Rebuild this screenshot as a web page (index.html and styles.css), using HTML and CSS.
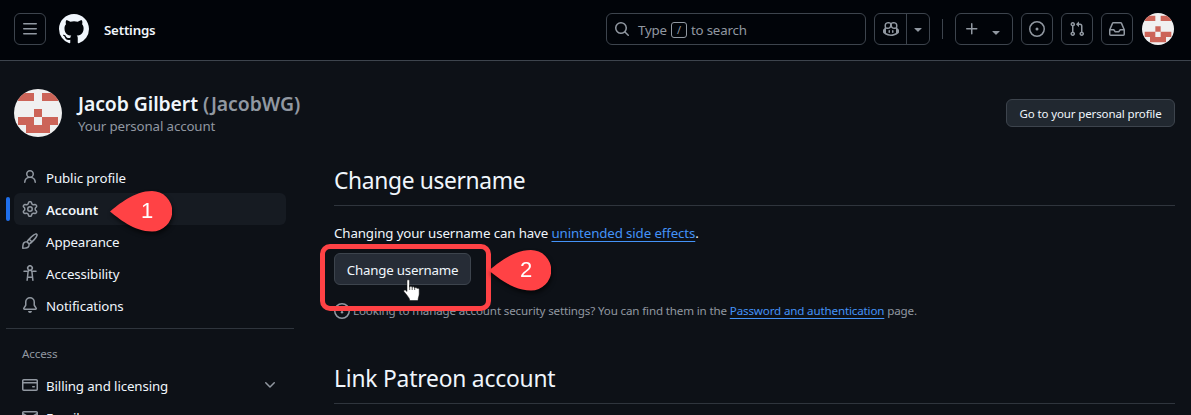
FILE: index.html
```html
<!DOCTYPE html>
<html lang="en">
<head>
<meta charset="utf-8">
<title>Account settings</title>
<link rel="stylesheet" href="styles.css">
</head>
<body>
<svg class="defs" width="0" height="0" aria-hidden="true">
  <symbol id="identicon" viewBox="0 0 48 48">
    <circle cx="24" cy="24" r="24" fill="#f0f0f0"/>
    <g clip-path="url(#round)" fill="#cc6458">
      <path d="M4 4h16v8H4zM28 4h16v8H28zM20 20h8v8h-8zM4 28h16v8H4zM28 28h16v8H28zM12 36h24v8H12z"/>
    </g>
  </symbol>
  <clipPath id="round"><circle cx="24" cy="24" r="24"/></clipPath>
  <symbol id="callout" viewBox="0 0 62 41">
    <path fill="#ff4245" d="M0 20.500C8 14 24 0 42 0a20 20 0 0 1 0 40.500C24 40.500 8 27 0 20.500Z"/>
  </symbol>
</svg>

<header class="topbar">
  <button class="icon-btn"><svg class="icon" viewBox="0 0 16 16"><path d="M1 2.750A.75.75 0 0 1 1.750 2h12.500a.75.75 0 0 1 0 1.500H1.750A.75.75 0 0 1 1 2.750Zm0 5A.75.75 0 0 1 1.750 7h12.500a.75.75 0 0 1 0 1.500H1.750A.75.75 0 0 1 1 7.750ZM1.750 12h12.500a.75.75 0 0 1 0 1.500H1.750a.75.75 0 0 1 0-1.500Z"/></svg></button>
  <svg class="logo" viewBox="0 0 16 16"><path d="M8 0c4.420 0 8 3.580 8 8a8.013 8.013 0 0 1-5.450 7.590c-.4.08-.55-.17-.55-.38 0-.27.01-1.130.01-2.200 0-.75-.25-1.230-.54-1.480 1.780-.2 3.650-.88 3.650-3.950 0-.88-.31-1.590-.82-2.150.08-.2.36-1.020-.08-2.120 0 0-.67-.22-2.200.82-.64-.18-1.320-.27-2-.27-.68 0-1.360.09-2 .27-1.530-1.030-2.200-.82-2.200-.82-.44 1.100-.16 1.920-.08 2.120-.51.56-.82 1.280-.82 2.150 0 3.060 1.860 3.750 3.640 3.950-.23.2-.44.55-.51 1.070-.46.21-1.610.55-2.330-.66-.15-.24-.6-.83-1.230-.82-.67.01-.27.38.01.53.34.19.73.9.82 1.130.16.45.68 1.310 2.690.94 0 .67.01 1.300.01 1.490 0 .21-.15.45-.55.38A7.995 7.995 0 0 1 0 8c0-4.420 3.580-8 8-8Z"/></svg>
  <span class="crumb">Settings</span>
  <div class="search">
    <svg class="icon" viewBox="0 0 16 16"><path d="M10.680 11.740a6 6 0 0 1-7.922-8.982 6 6 0 0 1 8.982 7.922l3.040 3.040a.749.749 0 0 1-.326 1.275.749.749 0 0 1-.734-.215ZM11.500 7a4.499 4.499 0 1 0-8.997 0A4.499 4.499 0 0 0 11.500 7Z"/></svg>
    <span class="type">Type</span><kbd>/</kbd><span>to search</span>
  </div>
  <div class="split">
    <button><svg class="icon" viewBox="0 0 16 16"><path d="M7.998 15.035c-4.562 0-7.873-2.914-7.998-3.749V9.338c.085-.628.677-1.686 1.588-2.065.013-.07.024-.143.036-.218.029-.183.06-.384.126-.612-.201-.508-.254-1.084-.254-1.656 0-.87.128-1.769.693-2.484.579-.733 1.494-1.124 2.724-1.261 1.206-.134 2.262.034 2.944.765.05.053.096.108.139.165.044-.057.094-.112.143-.165.682-.731 1.738-.899 2.944-.765 1.230.137 2.145.528 2.724 1.261.566.715.693 1.614.693 2.484 0 .572-.053 1.148-.254 1.656.066.228.098.429.126.612.012.076.024.148.037.218.924.385 1.522 1.471 1.591 2.095v1.872c0 .766-3.351 3.795-8.002 3.795Zm0-1.485c2.280 0 4.584-1.110 5.002-1.433V7.862l-.023-.116c-.49.21-1.075.291-1.727.291-1.146 0-2.059-.327-2.710-.991A3.222 3.222 0 0 1 8 6.303a3.240 3.240 0 0 1-.544.743c-.65.664-1.563.991-2.710.991-.652 0-1.236-.081-1.727-.291l-.023.116v4.255c.419.323 2.722 1.433 5.002 1.433ZM6.762 2.830c-.193-.206-.637-.413-1.682-.297-1.019.113-1.479.404-1.713.7-.247.312-.369.789-.369 1.554 0 .793.129 1.171.308 1.371.162.181.519.379 1.442.379.853 0 1.339-.235 1.638-.54.315-.322.527-.827.617-1.553.117-.935-.037-1.395-.241-1.614Zm4.155-.297c-1.044-.116-1.488.091-1.681.297-.204.219-.359.679-.242 1.614.091.726.303 1.231.618 1.553.299.305.784.54 1.638.54.922 0 1.280-.198 1.442-.379.179-.2.308-.578.308-1.371 0-.765-.123-1.242-.37-1.554-.233-.296-.693-.587-1.713-.7Z"/><path d="M6.250 9.037a.75.75 0 0 1 .75.75v1.501a.75.75 0 0 1-1.500 0V9.787a.75.75 0 0 1 .75-.75Zm4.250.75v1.501a.75.75 0 0 1-1.500 0V9.787a.75.75 0 0 1 1.500 0Z"/></svg></button>
    <button class="caret"><svg class="icon" viewBox="0 0 16 16"><path d="m4.427 7.427 3.396 3.396a.25.25 0 0 0 .354 0l3.396-3.396A.25.25 0 0 0 11.396 7H4.604a.25.25 0 0 0-.177.427Z"/></svg></button>
  </div>
  <span class="vrule"></span>
  <button class="icon-btn create">
    <svg class="icon" viewBox="0 0 16 16"><path d="M7.750 2a.75.75 0 0 1 .75.75V7h4.250a.75.75 0 0 1 0 1.500H8.500v4.250a.75.75 0 0 1-1.500 0V8.500H2.750a.75.75 0 0 1 0-1.500H7V2.750A.75.75 0 0 1 7.750 2Z"/></svg>
    <svg class="icon drop" viewBox="0 0 16 16"><path d="m4.427 7.427 3.396 3.396a.25.25 0 0 0 .354 0l3.396-3.396A.25.25 0 0 0 11.396 7H4.604a.25.25 0 0 0-.177.427Z"/></svg>
  </button>
  <button class="icon-btn"><svg class="icon" viewBox="0 0 16 16"><path d="M8 9.500a1.500 1.500 0 1 0 0-3 1.500 1.500 0 0 0 0 3Z"/><path d="M8 0a8 8 0 1 1 0 16A8 8 0 0 1 8 0ZM1.500 8a6.500 6.500 0 1 0 13 0 6.500 6.500 0 0 0-13 0Z"/></svg></button>
  <button class="icon-btn"><svg class="icon" viewBox="0 0 16 16"><path d="M1.500 3.250a2.250 2.250 0 1 1 3 2.122v5.256a2.251 2.251 0 1 1-1.500 0V5.372A2.250 2.250 0 0 1 1.500 3.250Zm5.677-.177L9.573.677A.25.25 0 0 1 10 .854V2.500h1A2.500 2.500 0 0 1 13.500 5v5.628a2.251 2.251 0 1 1-1.500 0V5a1 1 0 0 0-1-1h-1v1.646a.25.25 0 0 1-.427.177L7.177 3.427a.25.25 0 0 1 0-.354ZM3.750 2.500a.75.75 0 1 0 0 1.500.75.75 0 0 0 0-1.500Zm0 9.500a.75.75 0 1 0 0 1.500.75.75 0 0 0 0-1.500Zm8.250.75a.75.75 0 1 0 1.500 0 .75.75 0 0 0-1.500 0Z"/></svg></button>
  <button class="icon-btn"><svg class="icon" viewBox="0 0 16 16"><path d="M2.800 2.060A1.750 1.750 0 0 1 4.410 1h7.180c.7 0 1.333.417 1.610 1.060l2.740 6.395c.04.093.06.194.06.295v4.500A1.750 1.750 0 0 1 14.250 15H1.750A1.750 1.750 0 0 1 0 13.250v-4.500c0-.101.02-.202.06-.295Zm1.610.44a.25.25 0 0 0-.23.152L1.887 8H4.750a.75.75 0 0 1 .6.3L6.625 10h2.750l1.275-1.700a.75.75 0 0 1 .6-.3h2.863L11.820 2.652a.25.25 0 0 0-.23-.152Zm10.090 7h-2.875l-1.275 1.700a.75.75 0 0 1-.6.3h-3.500a.75.75 0 0 1-.6-.3L4.375 9.500H1.500v3.750c0 .138.112.25.25.25h12.500a.25.25 0 0 0 .25-.25Z"/></svg></button>
  <svg class="avatar-sm"><use href="#identicon"/></svg>
</header>

<section class="profile">
  <svg class="avatar-lg"><use href="#identicon"/></svg>
  <div class="who">
    <h1>Jacob Gilbert <span>(JacobWG)</span></h1>
    <p>Your personal account</p>
  </div>
  <button class="btn btn-sm"><span>Go to your personal profile</span></button>
</section>

<div class="layout">
  <nav class="side">
    <a class="item"><svg class="icon" viewBox="0 0 16 16"><path d="M10.561 8.073a6.005 6.005 0 0 1 3.432 5.142.75.75 0 1 1-1.498.07 4.500 4.500 0 0 0-8.990 0 .75.75 0 0 1-1.498-.07 6.004 6.004 0 0 1 3.431-5.142 3.999 3.999 0 1 1 5.123 0ZM10.500 5a2.500 2.500 0 1 0-5 0 2.500 2.500 0 0 0 5 0Z"/></svg><span>Public profile</span></a>
    <a class="item active"><svg class="icon" viewBox="0 0 16 16"><path d="M8 0a8.200 8.200 0 0 1 .701.031C9.444.095 9.990.645 10.160 1.290l.288 1.107c.018.066.079.158.212.224.231.114.454.243.668.386.123.082.233.09.299.071l1.103-.303c.644-.176 1.392.021 1.820.63.27.385.506.792.704 1.218.315.675.111 1.422-.364 1.891l-.814.806c-.049.048-.098.147-.088.294.016.257.016.515 0 .772-.01.147.038.246.088.294l.814.806c.475.469.679 1.216.364 1.891a7.977 7.977 0 0 1-.704 1.217c-.428.61-1.176.807-1.820.63l-1.102-.302c-.067-.019-.177-.011-.3.071a5.909 5.909 0 0 1-.668.386c-.133.066-.194.158-.211.224l-.29 1.106c-.168.646-.715 1.196-1.458 1.260a8.006 8.006 0 0 1-1.402 0c-.743-.064-1.289-.614-1.458-1.260l-.289-1.106c-.018-.066-.079-.158-.212-.224a5.738 5.738 0 0 1-.668-.386c-.123-.082-.233-.09-.299-.071l-1.103.303c-.644.176-1.392-.021-1.820-.63a8.120 8.120 0 0 1-.704-1.218c-.315-.675-.111-1.422.363-1.891l.815-.806c.05-.048.098-.147.088-.294a6.214 6.214 0 0 1 0-.772c.01-.147-.038-.246-.088-.294l-.815-.806C.635 6.045.431 5.298.746 4.623a7.920 7.920 0 0 1 .704-1.217c.428-.61 1.176-.807 1.820-.63l1.102.302c.067.019.177.011.3-.071.214-.143.437-.272.668-.386.133-.066.194-.158.211-.224l.29-1.106C6.009.645 6.556.095 7.299.03 7.530.010 7.764 0 8 0Zm-.571 1.525c-.036.003-.108.036-.137.146l-.289 1.105c-.147.561-.549.967-.998 1.189-.173.086-.34.183-.5.290-.417.278-.97.423-1.529.270l-1.103-.303c-.109-.030-.175.016-.195.045-.22.312-.412.644-.573.990-.014.031-.021.110.059.190l.815.806c.411.406.562.957.530 1.456a4.709 4.709 0 0 0 0 .582c.032.499-.119 1.050-.530 1.456l-.815.806c-.081.080-.073.159-.059.190.162.346.353.677.573.989.020.030.085.076.195.046l1.102-.303c.560-.153 1.113-.008 1.530.270.161.107.328.204.501.290.447.222.850.629.997 1.189l.289 1.105c.029.109.101.143.137.146a6.600 6.600 0 0 0 1.142 0c.036-.003.108-.036.137-.146l.289-1.105c.147-.561.549-.967.998-1.189.173-.086.340-.183.500-.290.417-.278.970-.423 1.529-.270l1.103.303c.109.029.175-.016.195-.045.220-.313.411-.644.573-.990.014-.031.021-.110-.059-.190l-.815-.806c-.411-.406-.562-.957-.530-1.456a4.709 4.709 0 0 0 0-.582c-.032-.499.119-1.050.530-1.456l.815-.806c.081-.080.073-.159.059-.190a6.464 6.464 0 0 0-.573-.989c-.020-.030-.085-.076-.195-.046l-1.102.303c-.560.153-1.113.008-1.530-.270a4.440 4.440 0 0 0-.501-.290c-.447-.222-.850-.629-.997-1.189l-.289-1.105c-.029-.110-.101-.143-.137-.146a6.600 6.600 0 0 0-1.142 0ZM11 8a3 3 0 1 1-6 0 3 3 0 0 1 6 0ZM9.500 8a1.500 1.500 0 1 0-3.001.001A1.500 1.500 0 0 0 9.500 8Z"/></svg><span>Account</span></a>
    <a class="item"><svg class="icon" viewBox="0 0 16 16"><path d="M11.134 1.535c.7-.509 1.416-.942 2.076-1.155.649-.21 1.463-.267 2.069.34.603.601.568 1.411.368 2.070-.202.668-.624 1.390-1.125 2.096-1.011 1.424-2.496 2.987-3.775 4.249-1.098 1.084-2.132 1.839-3.040 2.300a3.744 3.744 0 0 1-1.055 3.217c-.431.431-1.065.691-1.657.861-.614.177-1.294.287-1.914.357A21.151 21.151 0 0 1 .797 16H.743l.007-.750H.749L.742 16a.75.75 0 0 1-.743-.742l.743-.008-.742.007v-.054a21.250 21.250 0 0 1 .130-2.284c.067-.647.187-1.287.358-1.914.170-.591.430-1.226.860-1.657a3.746 3.746 0 0 1 3.227-1.054c.466-.893 1.225-1.907 2.314-2.982 1.271-1.255 2.833-2.750 4.245-3.777ZM1.620 13.089c-.051.464-.086.929-.104 1.395.466-.018.932-.053 1.396-.104a10.511 10.511 0 0 0 1.668-.309c.526-.151.856-.325 1.011-.480a2.250 2.250 0 1 0-3.182-3.182c-.155.155-.329.485-.480 1.011a10.515 10.515 0 0 0-.309 1.669Zm10.396-10.340c-1.224.89-2.605 2.189-3.822 3.384l1.718 1.718c1.210-1.205 2.510-2.597 3.387-3.833.470-.662.780-1.227.912-1.662.134-.444.032-.551.009-.575h-.001V1.780c-.014-.014-.113-.113-.548.027-.432.140-.995.462-1.655.942Zm-4.832 7.266-.001.001a9.859 9.859 0 0 0 1.630-1.142L7.155 7.216a9.700 9.700 0 0 0-1.161 1.607c.482.302.889.710 1.190 1.192Z"/></svg><span>Appearance</span></a>
    <a class="item"><svg class="icon" viewBox="0 0 16 16"><path d="M9.923 5.302c.063.063.122.129.178.198H14A.75.75 0 0 1 14 7h-3.300l.578 5.163.362 2.997a.75.75 0 0 1-1.490.18L9.868 13H6.132l-.282 2.340a.75.75 0 0 1-1.490-.18l.362-2.997L5.300 7H2a.75.75 0 0 1 0-1.500h3.900a2.540 2.540 0 0 1 .176-.198 3 3 0 1 1 3.847 0ZM9.200 7.073h-.001a1.206 1.206 0 0 0-2.398 0L6.305 11.500h3.390ZM9.500 3a1.500 1.500 0 1 0-3.001.001A1.500 1.500 0 0 0 9.500 3Z"/></svg><span>Accessibility</span></a>
    <a class="item"><svg class="icon" viewBox="0 0 16 16"><path d="M8 16a2 2 0 0 0 1.985-1.750c.017-.137-.097-.25-.235-.25h-3.500c-.138 0-.252.113-.235.25A2 2 0 0 0 8 16ZM3 5a5 5 0 0 1 10 0v2.947c0 .050.015.098.042.139l1.703 2.555A1.519 1.519 0 0 1 13.482 13H2.518a1.516 1.516 0 0 1-1.263-2.360l1.703-2.554A.255.255 0 0 0 3 7.947Zm5-3.500A3.500 3.500 0 0 0 4.500 5v2.947c0 .346-.102.683-.294.970l-1.703 2.556a.017.017 0 0 0-.003.010l.001.006c0 .002.002.004.004.006l.006.004.007.001h10.964l.007-.001.006-.004.004-.006.001-.007a.017.017 0 0 0-.003-.010l-1.703-2.554a1.745 1.745 0 0 1-.294-.970V5A3.500 3.500 0 0 0 8 1.500Z"/></svg><span>Notifications</span></a>
    <hr>
    <h3>Access</h3>
    <a class="item"><svg class="icon" viewBox="0 0 16 16"><path d="M10.750 9a.75.75 0 0 0 0 1.500h1.500a.75.75 0 0 0 0-1.500h-1.500Z"/><path d="M0 3.750C0 2.784.784 2 1.750 2h12.500c.966 0 1.750.784 1.750 1.750v8.500A1.750 1.750 0 0 1 14.250 14H1.750A1.750 1.750 0 0 1 0 12.250ZM14.500 6.500h-13v5.750c0 .138.112.25.25.25h12.500a.25.25 0 0 0 .25-.25Zm0-2.750a.25.25 0 0 0-.25-.25H1.750a.25.25 0 0 0-.25.25V5h13Z"/></svg><span>Billing and licensing</span><svg class="icon chev" viewBox="0 0 16 16"><path d="M12.780 5.220a.749.749 0 0 1 0 1.060l-4.250 4.250a.749.749 0 0 1-1.060 0L3.220 6.280a.749.749 0 1 1 1.060-1.060L8 8.939l3.720-3.719a.749.749 0 0 1 1.060 0Z"/></svg></a>
    <a class="item"><svg class="icon" viewBox="0 0 16 16"><path d="M1.750 2h12.500c.966 0 1.750.784 1.750 1.750v8.500A1.750 1.750 0 0 1 14.250 14H1.750A1.750 1.750 0 0 1 0 12.250v-8.500C0 2.784.784 2 1.750 2ZM1.500 12.251c0 .138.112.25.25.25h12.500a.25.25 0 0 0 .25-.25V5.809L8.380 9.397a.75.75 0 0 1-.760 0L1.500 5.809v6.442Zm13-8.181v-.320a.25.25 0 0 0-.25-.25H1.750a.25.25 0 0 0-.25.25v.320L8 7.880Z"/></svg><span>Emails</span></a>
  </nav>

  <main class="content">
    <h2>Change username</h2>
    <p class="lead">Changing your username can have <a>unintended side effects</a>.</p>
    <button class="btn btn-md"><span>Change username</span></button>
    <p class="note"><svg class="icon" viewBox="0 0 16 16"><path d="M8 10.500a1.200 1.200 0 1 0 0-2.400 1.200 1.200 0 0 0 0 2.400Z"/><path d="M8 0a8 8 0 1 1 0 16A8 8 0 0 1 8 0ZM1.500 8a6.500 6.500 0 1 0 13 0 6.500 6.500 0 0 0-13 0Z"/></svg><span>Looking to manage account security settings? You can find them in the <a>Password and authentication</a> page.</span></p>
    <h2 class="second">Link Patreon account</h2>
  </main>
</div>

<div class="marker"></div>
<div class="callout one"><svg><use href="#callout"/></svg><b>1</b></div>
<div class="callout two"><svg><use href="#callout"/></svg><b>2</b></div>
<svg class="pointer" viewBox="0 0 18 24"><path d="M4 1.500C4 .6 6.500.6 6.500 1.500V8c.4-1 2.400-.8 2.600.3.500-.8 2.300-.6 2.500.5.600-.7 2.200-.3 2.400.7.700-.5 2.200-.2 2.200 1V15c0 2-1 3-1.200 6.500H6.800C6.500 19 4.800 17.500 3.800 16L.9 12.500c-.6-1 .7-2 1.700-1.300L4 12.500Z" fill="#fff" stroke="#111" stroke-width=".5"/><path d="M6.700 6v5M9.200 7.500v3.500M11.700 8v3" stroke="#111" stroke-width=".7"/></svg>
</body>
</html>
```

FILE: styles.css
```css
* { box-sizing: border-box; }

body {
  margin: 0;
  height: 415px;
  overflow: hidden;
  position: relative;
  background: #0d1117;
  color: #f0f6fc;
  font-family: "Noto Sans", sans-serif;
  font-size: 13.3px;
  letter-spacing: -0.12px;
  line-height: 20px;
}

h1, h2, h3, p { margin: 0; font-weight: 400; }

button {
  padding: 0;
  border: 1px solid #3d444d;
  border-radius: 6px;
  background: transparent;
  color: inherit;
  font: inherit;
  letter-spacing: inherit;
}

.defs { position: absolute; }

.icon {
  width: 16px;
  height: 16px;
  flex: none;
  display: block;
  fill: #9198a1;
}

.topbar {
  height: 61px;
  padding: 13px 17px 0 14px;
  display: flex;
  align-items: flex-start;
  background: #010409;
  border-bottom: 1px solid #3d444d;
  letter-spacing: -0.2px;
}

.icon-btn {
  width: 32px;
  height: 32px;
  flex: none;
  display: flex;
  align-items: center;
  justify-content: center;
}
.icon-btn + .icon-btn { margin-left: 8px; }

.logo { width: 30px; height: 30px; margin: 1px 0 0 13px; fill: #f0f6fc; }
.crumb { margin: 7px 0 0 15px; font-weight: 600; }

.search {
  width: 260px;
  height: 32px;
  margin-left: auto;
  padding-left: 8px;
  display: flex;
  align-items: center;
  border: 1px solid #3d444d;
  border-radius: 6px;
  color: #9198a1;
}
.search .icon { margin-left: -1px; }
.search span { margin-top: 1px; }
.search .type { margin-left: 8px; width: 29px; }
.search kbd {
  width: 16px;
  height: 16px;
  margin: 1px 4px 0;
  border: 1px solid #9198a1;
  border-radius: 3px;
  font: 11px/14px "Noto Sans", sans-serif;
  text-align: center;
}

.split {
  width: 56px;
  height: 32px;
  margin-left: 8px;
  display: flex;
  border: 1px solid #3d444d;
  border-radius: 6px;
}
.split button {
  width: 31px;
  border: 0;
  border-radius: 0;
  display: flex;
  align-items: center;
  justify-content: center;
}
.split .caret { width: 23px; border-left: 1px solid #3d444d; }

.vrule { width: 1px; height: 20px; margin: 6px 12px 0; background: #3d444d; }
.create { width: 58px; gap: 8px; }
.create .drop { margin-top: 5px; }
.avatar-sm { width: 32px; height: 32px; margin-left: 9px; }

.profile {
  height: 100px;
  padding: 28px 16px 0 14px;
  display: flex;
  align-items: flex-start;
}
.avatar-lg { width: 48px; height: 48px; }
.who { margin-left: 16px; padding-top: 3px; }
.who h1 { font-size: 19.4px; line-height: 24px; font-weight: 600; letter-spacing: -0.08px; }
.who h1 span { color: #9198a1; }
.who p { color: #9198a1; line-height: 21px; }

.btn {
  display: block;
  background: #212830;
  text-align: center;
  white-space: nowrap;
}
.btn-sm { width: 169px; height: 28px; margin: 10px 0 0 auto; padding-top: 1px; font-size: 11.5px; }
.btn-md { width: 137px; height: 32px; margin-top: 10px; padding-top: 2px; background: #262c36; letter-spacing: -0.2px; }

.layout { display: flex; }

.side { width: 294px; padding-left: 14px; flex: none; }
.item {
  position: relative;
  width: 272px;
  height: 32px;
  padding-left: 8px;
  display: flex;
  align-items: center;
  border-radius: 6px;
}
.item span { margin: 2px 0 0 8px; }
.item.active { background: #161b22; font-weight: 600; }
.item.active::before {
  content: "";
  position: absolute;
  left: -8px;
  top: 4px;
  width: 4px;
  height: 24px;
  border-radius: 6px;
  background: #1f6feb;
}
.item .chev { margin-left: auto; margin-right: 8px; }
.side hr { height: 1px; margin: 7px 0 0 -8px; border: 0; background: #2f353d; }
.side h3 { padding: 15px 0 5px 8px; font-size: 11.6px; color: #9198a1; }

.content { flex: 1; margin: 0 16px 0 40px; }
.content h2 {
  height: 45px;
  padding-top: 4px;
  border-bottom: 1px solid #2f353d;
  font-size: 22.8px;
  line-height: 32px;
  letter-spacing: -0.35px;
}
.content a { color: #4493f8; text-decoration: underline; text-underline-offset: 3px; }
.lead { margin-top: 17px; }
.note {
  height: 20px;
  margin-top: 16px;
  display: flex;
  align-items: center;
  gap: 3px;
  color: #9198a1;
  font-size: 11.6px;
  letter-spacing: -0.15px;
}
.note .icon { margin-top: -1px; }
.content .second { margin-top: 38px; letter-spacing: -0.2px; }

.marker {
  position: absolute;
  left: 320px;
  top: 244px;
  width: 171px;
  height: 67px;
  border: 5px solid #ff4245;
  border-radius: 10px;
}

.callout {
  position: absolute;
  width: 62px;
  height: 41px;
  filter: drop-shadow(1px 3px 2px rgba(0, 0, 0, .6));
}
.callout svg { width: 62px; height: 41px; display: block; }
.callout b {
  position: absolute;
  left: 26px;
  top: 8px;
  width: 22px;
  font: 22px/24px "Liberation Sans", sans-serif;
  text-align: center;
  color: #fff;
}
.one { left: 110px; top: 191px; }
.two { left: 489px; top: 250px; }

.pointer { position: absolute; left: 403px; top: 279px; width: 18px; height: 24px; fill: none; }
```
